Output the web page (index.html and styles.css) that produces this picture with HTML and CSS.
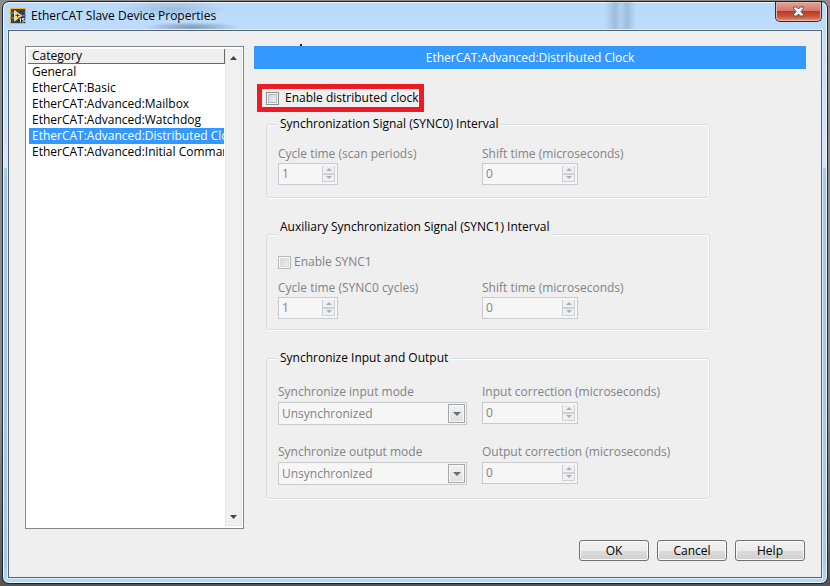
FILE: index.html
```html
<!DOCTYPE html>
<html lang="en">
<head>
  <meta charset="UTF-8">
  <meta name="viewport" content="width=device-width, initial-scale=1.0">
  <title>EtherCAT Slave Device Properties</title>
  <link rel="stylesheet" href="styles.css">
</head>
<body>
  <div class="window">
    <header class="titlebar">
      <svg class="app-icon" width="16" height="16" viewBox="0 0 16 16" aria-hidden="true">
        <rect x="0.5" y="0.5" width="15" height="15" fill="#3b4148" stroke="#f5b51b"/>
        <path d="M0 5h4M0 10h4M11 7.500h5" stroke="#3d8fd0" stroke-width="1.500"/>
        <path d="M4.500 2.500v10.500l7-5.200z" fill="#f7d673" stroke="#fff3c4" stroke-width="0.800"/>
        <path d="M5.500 7.500h4M7.500 5.700v3.600" stroke="#4a4020"/>
        <rect x="8.500" y="9.500" width="6.500" height="5.500" fill="#2b2f35"/>
        <path d="M9.500 11l1-.7v4M14.500 10.500h-2v1.500h1.500q1 1.200-.2 2h-1.500" fill="none" stroke="#fff" stroke-width="0.900"/>
      </svg>
      <h1>EtherCAT Slave Device Properties</h1>
      <button class="close" aria-label="Close">
        <svg width="13" height="11" viewBox="0 0 13 11">
          <path d="M1.500 1h3.300l1.700 2 1.700-2h3.300v1.500L9 5.500l2.500 3V10H8.200L6.500 8l-1.700 2H1.500V8.500L4 5.500l-2.500-3z" fill="#f4f4f4" stroke="#535666"/>
        </svg>
      </button>
    </header>

    <main class="client">
      <div class="content">
        <nav class="categories">
          <div class="category-list">
            <h2>Category</h2>
            <ul>
              <li><a href="#general">General</a></li>
              <li><a href="#basic">EtherCAT:Basic</a></li>
              <li><a href="#mailbox">EtherCAT:Advanced:Mailbox</a></li>
              <li><a href="#watchdog">EtherCAT:Advanced:Watchdog</a></li>
              <li><a href="#clock" class="selected">EtherCAT:Advanced:Distributed Clock</a></li>
              <li><a href="#commands">EtherCAT:Advanced:Initial Commands</a></li>
            </ul>
          </div>
          <div class="scrollbar">
            <button aria-label="Scroll up"><svg width="7" height="4" viewBox="0 0 7 4"><path d="M0 4l3.500-4L7 4z" fill="#444"/></svg></button>
            <button aria-label="Scroll down"><svg width="7" height="4" viewBox="0 0 7 4"><path d="M0 0l3.500 4L7 0z" fill="#444"/></svg></button>
          </div>
        </nav>

        <section class="page" id="clock">
          <h2 class="banner">EtherCAT:Advanced:Distributed Clock</h2>

          <form class="settings">
            <label class="check highlight"><input type="checkbox">Enable distributed clock</label>

            <fieldset class="group">
              <legend>Synchronization Signal (SYNC0) Interval</legend>
              <div class="fields">
                <div class="field">
                  <label for="cycle0">Cycle time (scan periods)</label>
                  <span class="spinner short">
                    <input id="cycle0" type="text" value="1" disabled>
                    <span class="arrows"><button type="button" class="up" aria-label="Increase" disabled></button><button type="button" class="down" aria-label="Decrease" disabled></button></span>
                  </span>
                </div>
                <div class="field">
                  <label for="shift0">Shift time (microseconds)</label>
                  <span class="spinner">
                    <input id="shift0" type="text" value="0" disabled>
                    <span class="arrows"><button type="button" class="up" aria-label="Increase" disabled></button><button type="button" class="down" aria-label="Decrease" disabled></button></span>
                  </span>
                </div>
              </div>
            </fieldset>

            <fieldset class="group auxiliary">
              <legend>Auxiliary Synchronization Signal (SYNC1) Interval</legend>
              <label class="check"><input type="checkbox" disabled>Enable SYNC1</label>
              <div class="fields">
                <div class="field">
                  <label for="cycle1">Cycle time (SYNC0 cycles)</label>
                  <span class="spinner short">
                    <input id="cycle1" type="text" value="1" disabled>
                    <span class="arrows"><button type="button" class="up" aria-label="Increase" disabled></button><button type="button" class="down" aria-label="Decrease" disabled></button></span>
                  </span>
                </div>
                <div class="field">
                  <label for="shift1">Shift time (microseconds)</label>
                  <span class="spinner">
                    <input id="shift1" type="text" value="0" disabled>
                    <span class="arrows"><button type="button" class="up" aria-label="Increase" disabled></button><button type="button" class="down" aria-label="Decrease" disabled></button></span>
                  </span>
                </div>
              </div>
            </fieldset>

            <fieldset class="group in-out">
              <legend>Synchronize Input and Output</legend>
              <div class="fields">
                <div class="field">
                  <label for="input-mode">Synchronize input mode</label>
                  <span class="combo">
                    <select id="input-mode" disabled><option>Unsynchronized</option></select>
                    <span class="drop"></span>
                  </span>
                </div>
                <div class="field">
                  <label for="input-corr">Input correction (microseconds)</label>
                  <span class="spinner">
                    <input id="input-corr" type="text" value="0" disabled>
                    <span class="arrows"><button type="button" class="up" aria-label="Increase" disabled></button><button type="button" class="down" aria-label="Decrease" disabled></button></span>
                  </span>
                </div>
                <div class="field">
                  <label for="output-mode">Synchronize output mode</label>
                  <span class="combo">
                    <select id="output-mode" disabled><option>Unsynchronized</option></select>
                    <span class="drop"></span>
                  </span>
                </div>
                <div class="field">
                  <label for="output-corr">Output correction (microseconds)</label>
                  <span class="spinner">
                    <input id="output-corr" type="text" value="0" disabled>
                    <span class="arrows"><button type="button" class="up" aria-label="Increase" disabled></button><button type="button" class="down" aria-label="Decrease" disabled></button></span>
                  </span>
                </div>
              </div>
            </fieldset>
          </form>
        </section>
      </div>

      <footer class="actions">
        <button>OK</button>
        <button>Cancel</button>
        <button>Help</button>
      </footer>
    </main>
  </div>
</body>
</html>
```
FILE: styles.css
```css
* {
  box-sizing: border-box;
}
body {
  margin: 0;
  min-height: 100vh;
  display: flex;
  padding: 1px 2px 2px;
  background: linear-gradient(#8c8c8c, #8c8c8c 70%, #555);
  font: 12px/16px "Open Sans", "Noto Sans", sans-serif;
  color: #000;
}
button, input, select {
  font: inherit;
  margin: 0;
}
h1, h2, ul {
  margin: 0;
  padding: 0;
  font-size: 12px;
  font-weight: normal;
}

/* window frame */
.window {
  flex: 1;
  min-width: 0;
  display: flex;
  flex-direction: column;
  padding: 0 5px 5px;
  border: 1px solid #1c242c;
  border-radius: 7px;
  box-shadow: inset 0 0 0 1px #eef6ff;
  background: linear-gradient(#b9dafd, #d3e5fa 165px, #a5c8e8 167px, #a5c8e8 560px, #b5d8fb);
}
.titlebar {
  display: flex;
  align-items: center;
  gap: 5px;
  height: 28px;
  padding-left: 2px;
  background:
    radial-gradient(ellipse 48px 5px at 184px 25px, rgba(60, 85, 115, 0.5), transparent),
    radial-gradient(ellipse 55px 9px at 165px 7px, rgba(90, 120, 150, 0.3), transparent),
    linear-gradient(to right, transparent 597px, rgba(100, 130, 160, 0.35) 607px, rgba(140, 170, 200, 0.2) 613px, rgba(100, 130, 160, 0.35) 619px, transparent 628px);
}
.close {
  align-self: flex-start;
  display: flex;
  align-items: center;
  justify-content: center;
  width: 47px;
  height: 20px;
  margin-left: auto;
  padding: 0;
  border: 1px solid #561d1d;
  border-top: 0;
  border-radius: 0 0 5px 5px;
  box-shadow: inset 0 0 0 1px #e8b3a8;
  background: linear-gradient(#e5a599, #d4786a 45%, #b93b26 50%, #c95c42 80%, #e59a80);
}
.client {
  flex: 1;
  display: flex;
  flex-direction: column;
  gap: 11px;
  padding: 15px 15px 16px 16px;
  border: 1px solid #54616f;
  box-shadow: 0 0 0 1px #dceeff;
  background: #efefef;
}
.content {
  flex: 1;
  display: flex;
  gap: 10px;
}

/* category list */
.categories {
  flex: none;
  width: 219px;
  display: flex;
  padding: 2px 1px 2px 2px;
  border: 1px solid #828790;
  background: #fff;
}
.category-list {
  flex: 1;
  min-width: 0;
}
.category-list h2 {
  padding-left: 4px;
  line-height: 14px;
  border-right: 1px solid #696969;
  border-bottom: 1px solid #696969;
  background: #efefef;
}
.category-list ul {
  list-style: none;
  padding: 0 1px;
}
.category-list a {
  display: block;
  padding-left: 3px;
  overflow: hidden;
  white-space: nowrap;
  color: #000;
  text-decoration: none;
}
.category-list .selected {
  background: #3399ff;
  color: #fff;
}
.scrollbar {
  width: 17px;
  display: flex;
  flex-direction: column;
  justify-content: space-between;
  border: 1px solid #e6e6e6;
  background: #f0f0f0;
}
.scrollbar button {
  display: flex;
  align-items: center;
  justify-content: center;
  height: 16px;
  padding: 0;
  border: 0;
  background: none;
}

/* settings page */
.page {
  flex: 1;
}
.banner {
  position: relative;
  line-height: 23px;
  text-align: center;
  background: #3399ff;
  color: #fff;
}
.banner::before {
  content: "";
  position: absolute;
  left: 46px;
  top: -2px;
  width: 2px;
  height: 2px;
  background: #222;
}
.settings {
  display: flex;
  flex-direction: column;
  align-items: flex-start;
  padding: 15px 0 0 12px;
}
.check {
  display: flex;
  align-items: center;
  gap: 3px;
}
.check input {
  appearance: none;
  width: 13px;
  height: 13px;
  border: 1px solid #8e8f8f;
  box-shadow: inset 0 0 0 1px #f4f4f4, inset 0 0 0 2px #b8bcc2;
  background: linear-gradient(135deg, #cbcfd5, #f6f6f6);
}
.check input:disabled {
  border-color: #b8b8b8;
  box-shadow: inset 0 0 0 1px #f8f8f8, inset 0 0 0 2px #d8dadd;
}
.highlight {
  gap: 6px;
  margin-left: -9px;
  padding: 1px 1px 1px 4px;
  border: 5px solid #ed1c24;
}
.group {
  width: 444px;
  margin: 4px 0 0;
  padding: 14px 11px 12px;
  border: 1px solid #d5dfe5;
  border-radius: 3px;
  box-shadow: inset 0 1px #fff, inset -1px 0 #fff, 0 1px #fff;
  color: #838383;
}
.group legend {
  padding: 0 2px;
  background: #efefef;
  color: #000;
}
.auxiliary {
  margin-top: 21px;
  padding-top: 5px;
  padding-bottom: 10px;
}
.auxiliary legend {
  padding-bottom: 14px;
}
.auxiliary .check {
  margin-bottom: 10px;
}
.in-out {
  margin-top: 20px;
  padding-top: 18px;
  padding-bottom: 13px;
}
.fields {
  display: grid;
  grid-template-columns: 189px 1fr;
  gap: 19px 15px;
}
.field {
  display: flex;
  flex-direction: column;
  align-items: flex-start;
  gap: 1px;
}
.in-out .field {
  gap: 2px;
}
.spinner {
  display: flex;
  width: 96px;
  height: 22px;
  padding: 2px;
  border: 1px solid #c9cacc;
  background: #f6f6f6;
}
.short {
  width: 60px;
}
.spinner input {
  flex: 1;
  min-width: 0;
  padding: 0 1px;
  border: 0;
  background: none;
  color: #838383;
}
.arrows {
  width: 13px;
  display: flex;
  flex-direction: column;
}
.arrows button {
  flex: 1;
  display: flex;
  align-items: center;
  justify-content: center;
  padding: 0;
  border: 1px solid #cfd0d2;
  background: #f0f0f0;
}
.arrows .up {
  border-top: 0;
}
.arrows button::before {
  content: "";
  border: 3px solid transparent;
}
.arrows .up::before {
  border-top: 0;
  border-bottom: 3px solid #a3acd0;
}
.arrows .down::before {
  border-bottom: 0;
  border-top: 3px solid #a3acd0;
}
.combo {
  position: relative;
  width: 100%;
}
.combo select {
  appearance: none;
  display: block;
  width: 100%;
  height: 23px;
  padding: 0 3px;
  border: 1px solid #c9cacc;
  border-radius: 0;
  background: #f6f6f6;
  color: #838383;
  opacity: 1;
}
.drop {
  position: absolute;
  top: 2px;
  right: 2px;
  bottom: 2px;
  width: 17px;
  display: flex;
  align-items: center;
  justify-content: center;
  border: 1px solid #a5a6a8;
  box-shadow: inset 0 0 0 1px #fafafa;
  background: linear-gradient(#f2f2f2, #dfdfdf);
  pointer-events: none;
}
.drop::before {
  content: "";
  border: 4px solid transparent;
  border-top-color: #6d6d6d;
  border-bottom: 0;
}

/* dialog buttons */
.actions {
  display: flex;
  justify-content: flex-end;
  gap: 8px;
  padding-right: 1px;
}
.actions button {
  width: 70px;
  height: 21px;
  padding: 0;
  border: 1px solid #707070;
  border-radius: 3px;
  box-shadow: inset 0 0 0 1px #fafafa;
  background: linear-gradient(#f2f2f2, #ebebeb 50%, #dddddd 50%, #cfcfcf);
}
```
